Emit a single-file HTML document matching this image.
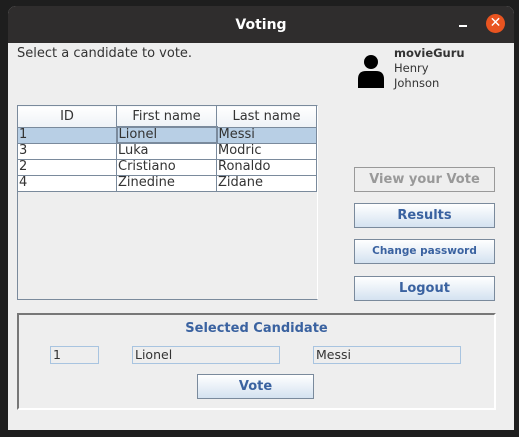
<!DOCTYPE html>
<html><head><style>
*{margin:0;padding:0;box-sizing:border-box}
body{width:519px;height:437px;background:#1e1e1e;position:relative;font-family:"DejaVu Sans","Liberation Sans",sans-serif;overflow:hidden}
.win{position:absolute;left:8px;top:6px;width:506px;height:424px;background:#eeeeee;border-radius:8px 8px 0 0;overflow:hidden}
.tb{position:absolute;left:0;top:0;width:506px;height:37px;background:#2f2d2d;color:#fff;font-weight:bold;font-size:14px;text-align:center;line-height:39px}
.a{position:absolute}
.t{font-size:13px;color:#333}
table{border-collapse:collapse;font-size:13px;color:#333;table-layout:fixed}
td{height:16px;line-height:14px;padding:0 1px;border:1px solid #7a8a9c;overflow:hidden;white-space:nowrap}
th{height:21px;font-weight:normal;border:1px solid #7a8a9c;background:linear-gradient(#fff,#eef2f6);line-height:18px;padding-top:2px}
.btn{position:absolute;left:346px;width:141px;height:25px;border:1px solid #7a8a9c;background:linear-gradient(#fff,#d4e2f0);color:#3a62a0;font-weight:bold;font-size:13px;text-align:center;line-height:23px}
.fld{position:absolute;height:18px;border:1px solid #a8c4e0;font-size:12.5px;color:#333;padding-left:2px;line-height:16px}
</style></head><body>
<div class="win">
<div class="tb">Voting</div>
<div class="a" style="left:451px;top:19px;width:8px;height:2px;background:#fff"></div>
<div class="a" style="left:478px;top:8px;width:19px;height:19px;border-radius:50%;background:#e95420;color:#fff;font-size:14px;text-align:center;line-height:19px">✕</div>
<div class="a t" style="left:9px;top:40px">Select a candidate to vote.</div>
<svg class="a" style="left:348px;top:47px" width="30" height="36" viewBox="0 0 30 36"><circle cx="15" cy="9" r="7" fill="#000"/><path d="M2 35 V26 Q2 18 10 18 H20 Q28 18 28 26 V35 Z" fill="#000"/></svg>
<div class="a t" style="left:386px;top:40px;font-weight:bold;font-size:11.5px">movieGuru</div>
<div class="a t" style="left:386px;top:55px;font-size:11.5px">Henry</div>
<div class="a t" style="left:386px;top:70px;font-size:11.5px">Johnson</div>
<div class="a" style="left:9px;top:99px;width:301px;height:195px;border:1px solid #7a8a9c;border-right-color:#fff;border-bottom-color:#7a8a9c"></div>
<table class="a" style="left:9px;top:99px;width:300px">
<tr style="background:#fff"><th style="width:99px">ID</th><th style="width:100px">First name</th><th>Last name</th></tr>
<tr style="background:#b8cfe5"><td>1</td><td style="border:2px solid #7a8a9c">Lionel</td><td>Messi</td></tr>
<tr style="background:#fff"><td>3</td><td>Luka</td><td>Modric</td></tr>
<tr style="background:#fff"><td>2</td><td>Cristiano</td><td>Ronaldo</td></tr>
<tr style="background:#fff"><td>4</td><td>Zinedine</td><td>Zidane</td></tr>
</table>
<div class="btn" style="top:161px;background:#eee;border-color:#999;color:#999">View your Vote</div>
<div class="btn" style="top:197px">Results</div>
<div class="btn" style="top:233px;font-size:10.5px">Change password</div>
<div class="btn" style="top:270px">Logout</div>
<div class="a" style="left:9px;top:307px;width:479px;height:97px;border:2px solid #fff;border-top-color:#777;border-left-color:#777"></div>
<div class="a" style="left:9px;top:315px;width:479px;text-align:center;color:#3a62a0;font-weight:bold;font-size:13px">Selected Candidate</div>
<div class="fld" style="left:42px;top:340px;width:49px">1</div>
<div class="fld" style="left:124px;top:340px;width:148px">Lionel</div>
<div class="fld" style="left:305px;top:340px;width:148px">Messi</div>
<div class="btn" style="left:189px;top:368px;width:117px">Vote</div>
</div>
</body></html>
